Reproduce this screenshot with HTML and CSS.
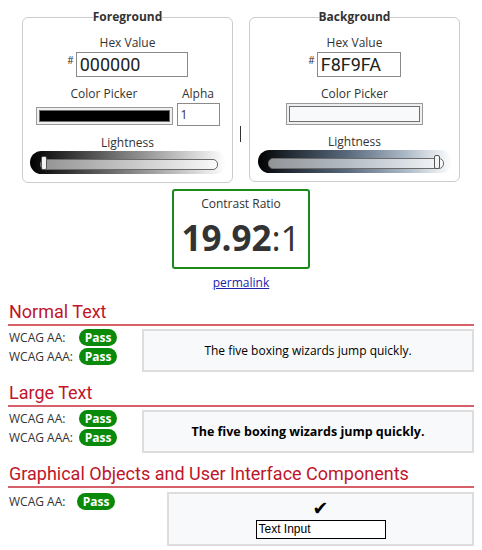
FILE: index.html
```html
<!DOCTYPE html>
<html>
<head>
<meta charset="utf-8">
<link rel="stylesheet" href="styles.css">
</head>
<body>
<div class="page">
  <div class="pickers">
    <fieldset class="panel">
      <legend>Foreground</legend>
      <div class="label">Hex Value</div>
      <div class="hexrow"><span class="hash">#</span><input class="hex hex-fg" value="000000"></div>
      <div class="pickrow">
        <div class="col">
          <div class="label">Color Picker</div>
          <div class="swatch-btn swatch-fg"><span class="swatch swatch-black"></span></div>
        </div>
        <div class="col">
          <div class="label">Alpha</div>
          <input class="alpha" value="1">
        </div>
      </div>
      <div class="label label-light">Lightness</div>
      <div class="slider slider-fg">
        <div class="track"></div>
        <div class="thumb thumb-fg"></div>
      </div>
    </fieldset>
    <div class="caret"></div>
    <fieldset class="panel">
      <legend>Background</legend>
      <div class="label">Hex Value</div>
      <div class="hexrow"><span class="hash">#</span><input class="hex hex-bg" value="F8F9FA"></div>
      <div class="pickrow">
        <div class="col">
          <div class="label">Color Picker</div>
          <div class="swatch-btn swatch-bgc"><span class="swatch swatch-light"></span></div>
        </div>
      </div>
      <div class="label label-light label-light-bg">Lightness</div>
      <div class="slider slider-bg">
        <div class="track"></div>
        <div class="thumb thumb-bg"></div>
      </div>
    </fieldset>
  </div>

  <div class="ratio-box">
    <div class="ratio-title">Contrast Ratio</div>
    <div class="ratio-value"><b>19.92</b>:1</div>
  </div>
  <div class="permalink"><a href="#">permalink</a></div>

  <h2 class="sec-title">Normal Text</h2>
  <div class="result">
    <div class="checks">
      <div class="check"><span class="wcag">WCAG AA:</span><span class="pass">Pass</span></div>
      <div class="check"><span class="wcag">WCAG AAA:</span><span class="pass">Pass</span></div>
    </div>
    <div class="sample sample-normal">The five boxing wizards jump quickly.</div>
  </div>

  <h2 class="sec-title">Large Text</h2>
  <div class="result">
    <div class="checks">
      <div class="check"><span class="wcag">WCAG AA:</span><span class="pass">Pass</span></div>
      <div class="check"><span class="wcag">WCAG AAA:</span><span class="pass">Pass</span></div>
    </div>
    <div class="sample sample-large">The five boxing wizards jump quickly.</div>
  </div>

  <h2 class="sec-title">Graphical Objects and User Interface Components</h2>
  <div class="result">
    <div class="checks">
      <div class="check check-ui"><span class="wcag">WCAG AA:</span><span class="pass">Pass</span></div>
    </div>
    <div class="sample sample-ui">
      <div class="tick">✔</div>
      <div class="text-input">Text Input</div>
    </div>
  </div>
</div>
</body>
</html>
```

FILE: styles.css
```css
html, body {
  margin: 0;
  padding: 0;
  background: #ffffff;
}
body {
  font-family: "Open Sans", "DejaVu Sans", sans-serif;
  color: #333333;
}
.page {
  padding: 8px 8px 0 8px;
}
.pickers {
  display: flex;
  justify-content: center;
  align-items: flex-start;
}
.panel {
  width: 211px;
  box-sizing: border-box;
  margin: 0;
  padding: 0 0 8px 0;
  min-width: 0;
  border: 1px solid #cccccc;
  border-radius: 6px;
  text-align: center;
}
.panel legend {
  margin: 0 auto;
  padding: 0;
  font-weight: 700;
  font-size: 12px;
  line-height: 18px;
  color: #333333;
}
.caret {
  width: 1px;
  height: 16px;
  background: #333333;
  margin: 118px 8px 0 7px;
}
.label {
  font-size: 12px;
  line-height: 16px;
  color: #333333;
  margin-top: 9px;
}
.hexrow {
  display: flex;
  justify-content: center;
  align-items: flex-start;
  margin-top: 1px;
  height: 25px;
}
.hash {
  font-size: 10px;
  line-height: 10px;
  margin-top: 3px;
  margin-right: 2px;
}
.hex {
  box-sizing: border-box;
  height: 25px;
  margin: 0;
  padding: 0 3px;
  border: 1px solid #8a8a8a;
  font-family: Roboto, "Liberation Sans", sans-serif;
  font-size: 18px;
  color: #222222;
  background: #ffffff;
}
.hex-fg { width: 112px; }
.hex-bg { width: 84px; }
.pickrow {
  display: flex;
  justify-content: center;
  gap: 4px;
}
.col {
  display: flex;
  flex-direction: column;
  align-items: center;
}
.swatch-btn {
  box-sizing: border-box;
  width: 137px;
  border: 1px solid #9a9a9a;
  background: #efefef;
  padding: 2px;
  display: flex;
}
.swatch-fg {
  height: 18px;
  margin-top: 5px;
}
.swatch-bgc {
  height: 22px;
  margin-top: 1px;
}
.swatch {
  flex: 1;
  border: 1px solid #6f6f6f;
}
.swatch-black { background: #000000; }
.swatch-light { background: #f8f9fa; }
.alpha {
  box-sizing: border-box;
  width: 43px;
  height: 23px;
  margin: 1px 0 0 0;
  padding: 0 3px;
  border: 1px solid #8a8a8a;
  font-family: "Open Sans", sans-serif;
  font-size: 12px;
  color: #333333;
}
.label-light-bg {
  margin-top: 9px;
}
.slider {
  position: relative;
  margin: 0 auto;
  width: 196px;
  height: 23px;
  border-radius: 12px;
  box-sizing: border-box;
  padding: 8px 8px 0 10px;
}
.slider-fg {
  background: linear-gradient(to right, #000000 0%, #1a1a1a 10%, #808080 50%, #ffffff 100%);
}
.slider-bg {
  width: 194px;
  background: linear-gradient(to right, #000000 0%, #1b2129 12%, #56677a 45%, #a9b6c4 75%, #ffffff 100%);
}
.track {
  height: 9px;
  border: 1px solid #6a6a6a;
  border-radius: 5px;
  background: rgba(255, 255, 255, 0.55);
}
.thumb {
  position: absolute;
  top: 5px;
  width: 6px;
  height: 14px;
  box-sizing: border-box;
  border: 1px solid #555555;
  border-radius: 2px;
  background: #f4f4f4;
}
.thumb-fg { left: 11px; }
.thumb-bg { left: 176px; }

.ratio-box {
  box-sizing: border-box;
  width: 138px;
  height: 80px;
  margin: 6px auto 0 auto;
  border: 2px solid #1a8a1a;
  border-radius: 3px;
  text-align: center;
  padding-top: 5px;
}
.ratio-title {
  font-size: 12px;
  line-height: 16px;
  color: #333333;
}
.ratio-value {
  font-size: 35px;
  line-height: 40px;
  margin-top: 6px;
  color: #333333;
  font-weight: 400;
}
.ratio-value b {
  font-weight: 700;
}
.permalink {
  text-align: center;
  margin-top: 6px;
  font-size: 12px;
  line-height: 16px;
}
.permalink a {
  color: #2222aa;
  text-decoration: underline;
}
.sec-title {
  margin: 10px 0 0 0;
  padding: 0 0 1px 1px;
  font-family: Roboto, "Liberation Sans", sans-serif;
  font-weight: 400;
  font-size: 18px;
  line-height: 22px;
  color: #c0152a;
  border-bottom: 2px solid #d6616b;
}
.result {
  display: flex;
  align-items: flex-start;
  margin-top: 3px;
}
.checks {
  display: flex;
  flex-direction: column;
  gap: 2px;
}
.check {
  display: flex;
  align-items: center;
  height: 17px;
}
.wcag {
  width: 70px;
  padding-left: 1px;
  font-size: 12px;
  color: #333333;
}
.pass {
  display: inline-block;
  width: 38px;
  height: 17px;
  line-height: 17px;
  border-radius: 9px;
  background: #0a8a0a;
  color: #ffffff;
  font-weight: 700;
  font-size: 12px;
  text-align: center;
}
.check-ui {
  margin-top: 2px;
}
.check-ui .wcag {
  width: 68px;
}
.sample {
  box-sizing: border-box;
  margin-left: auto;
  background: #f8f9fa;
  border: 2px solid #dddddd;
  color: #000000;
  text-align: center;
}
.sample-normal,
.sample-large {
  width: 332px;
  height: 43px;
  line-height: 39px;
  font-size: 12px;
}
.sample-large {
  font-weight: 700;
  font-size: 12.5px;
}
.sample-ui {
  width: 307px;
  height: 54px;
  display: flex;
  flex-direction: column;
  align-items: center;
  padding-top: 4px;
  margin-top: 1px;
}
.tick {
  font-family: "DejaVu Sans", sans-serif;
  font-size: 19px;
  line-height: 20px;
  color: #000000;
}
.text-input {
  box-sizing: border-box;
  width: 130px;
  height: 19px;
  margin-top: 2px;
  border: 1px solid #000000;
  background: #ffffff;
  text-align: left;
  padding-left: 2px;
  font-family: "Liberation Sans", Arial, sans-serif;
  font-size: 12px;
  line-height: 17px;
  color: #000000;
}
```
